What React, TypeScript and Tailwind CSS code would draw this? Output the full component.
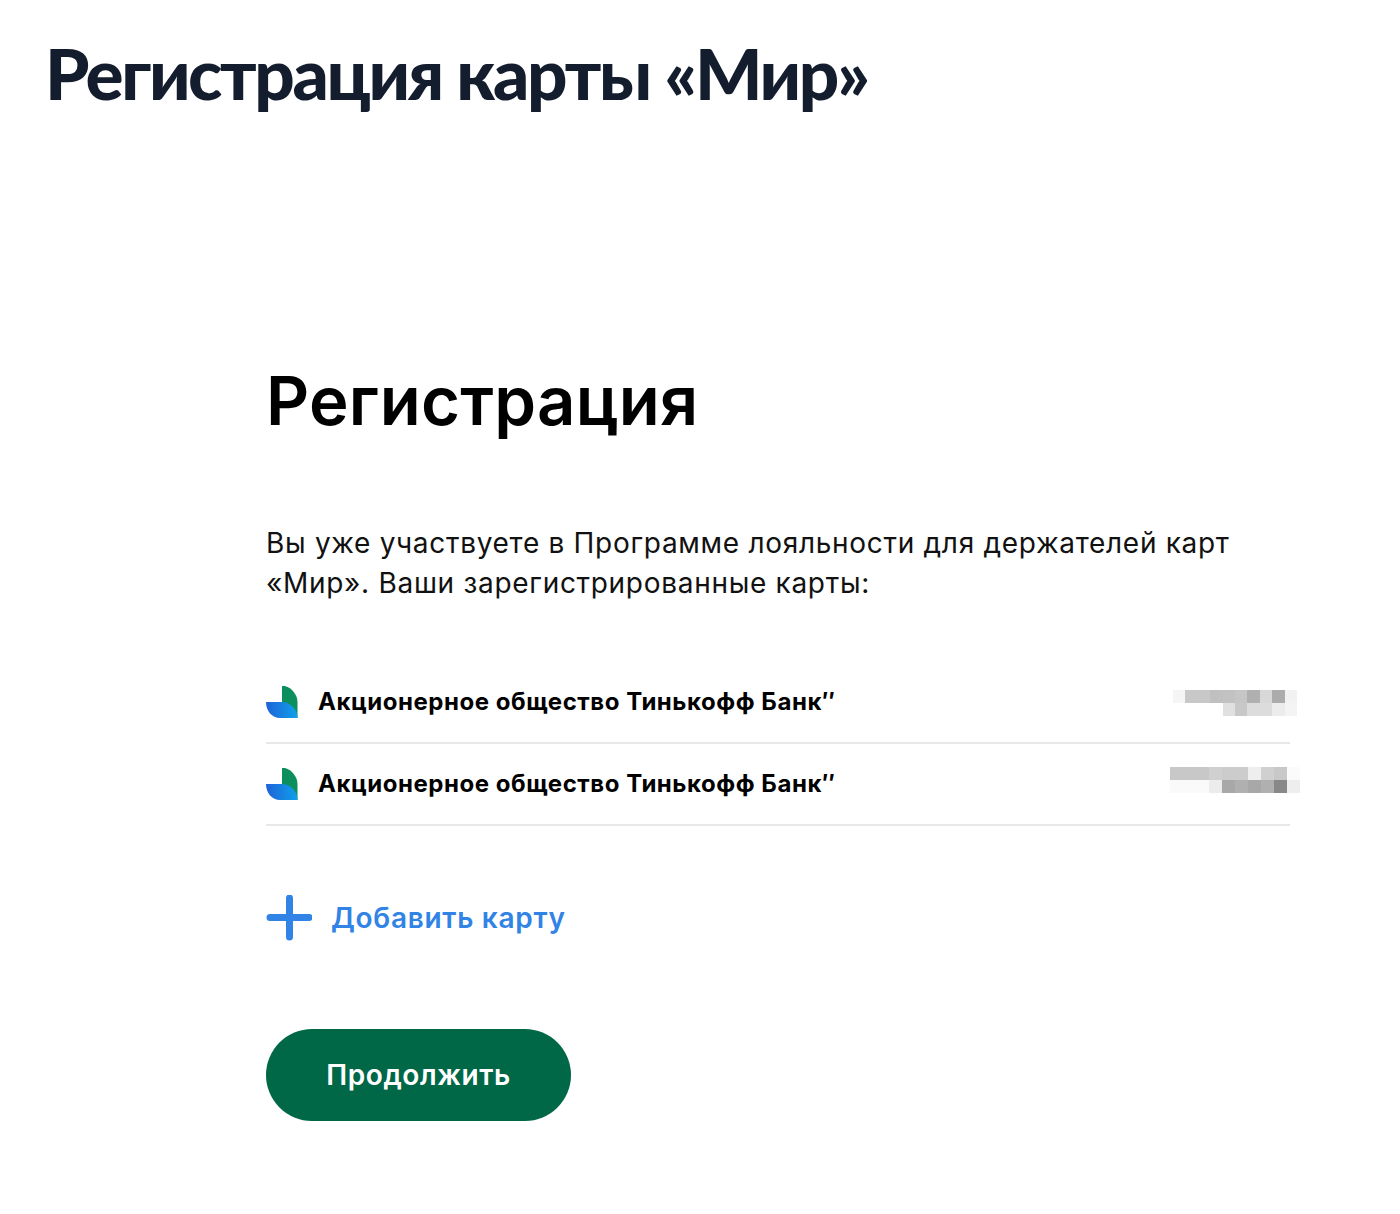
const cardRows = [
  {
    top: ["#f5f5f5", "#c8c8c8", "#c8c8c8", "#c0c0c0", "#c2c2c2", "#c6c6c6", "#b0b0b0", "#d8d8d8", "#acacac", "#f2f2f2"],
    bottom: ["#fff", "#fff", "#fff", "#fff", "#e0e0e0", "#c8c8c8", "#dcdcdc", "#dcdcdc", "#ececec", "#f4f4f4"],
    className: "mt-[2px] -mr-[7px] w-[124px]",
  },
  {
    top: ["#c8c8c8", "#c8c8c8", "#c8c8c8", "#d0d0d0", "#cccccc", "#cccccc", "#eeeeee", "#d0d0d0", "#c8c8c8", "#fbfbfb"],
    bottom: ["#fafafa", "#fafafa", "#fafafa", "#ececec", "#a8a8a8", "#b0b0b0", "#a8a8a8", "#b0b0b0", "#888888", "#eeeeee"],
    className: "mb-[8px] -mr-[10px] w-[130px]",
  },
];

function BankLogo() {
  return (
    <svg width="32" height="32" viewBox="0 0 32 32" className="shrink-0">
      <defs>
        <linearGradient id="bank-blue" x1="0" y1="0" x2="1" y2="0">
          <stop offset="0" stopColor="#1d63d8" />
          <stop offset="1" stopColor="#10a0ea" />
        </linearGradient>
      </defs>
      <path d="M16 0 H19 C26 2 31.5 9 31.5 16 V32 H16 Z" fill="#0c8f5c" />
      <path d="M0 16 H16 C24 16 31.5 23 31.5 32 H14 C6 32 0 25 0 16 Z" fill="url(#bank-blue)" />
    </svg>
  );
}

function Pixels({ rows }: { rows: { top: string[]; bottom: string[]; className: string } }) {
  return (
    <div className={`flex flex-col ${rows.className}`}>
      {[rows.top, rows.bottom].map((row, i) => (
        <div key={i} className="flex">
          {row.map((c, j) => (
            <span key={j} className="h-[13px] flex-1" style={{ backgroundColor: c }} />
          ))}
        </div>
      ))}
    </div>
  );
}

function CardRow({ rows }: { rows: { top: string[]; bottom: string[]; className: string } }) {
  return (
    <div className="flex h-[82px] w-[1024px] items-center border-b-2 border-[#e8e8e8]">
      <BankLogo />
      <span className="ml-[20px] text-[24px] font-bold tracking-[0.54px] text-black">
        Акционерное общество Тинькофф Банк″
      </span>
      <div className="ml-auto">
        <Pixels rows={rows} />
      </div>
    </div>
  );
}

export default function App() {
  return (
    <div className="h-[1214px] w-[1400px] bg-white font-['Inter',sans-serif]">
      <h1 className="pl-[45px] pt-[31px] font-['Lato',sans-serif] text-[71px] leading-[84px] font-black tracking-[-2.4px] text-[#131d2e]">
        Регистрация карты «Мир»
      </h1>

      <main className="pl-[266px] pt-[246px]">
        <h2 className="text-[67px] leading-[80px] font-semibold tracking-[0.25px] text-black">Регистрация</h2>

        <p className="mt-[82px] text-[28px] leading-[40px] tracking-[0.7px] text-[#111]">
          Вы уже участвуете в Программе лояльности для держателей карт
          <br />
          «Мир». Ваши зарегистрированные карты:
        </p>

        <div className="mt-[59px] flex flex-col">
          {cardRows.map((rows, i) => (
            <CardRow key={i} rows={rows} />
          ))}
        </div>

        <a className="mt-[68px] flex items-center gap-[19px] text-[28px] leading-[48px] font-semibold tracking-[0.7px] text-[#3183e6]">
          <svg width="46" height="46" viewBox="0 0 46 46">
            <path d="M23.5 3 V42 M4 22.5 H43" stroke="#3183e6" strokeWidth="7" strokeLinecap="round" />
          </svg>
          Добавить карту
        </a>

        <button className="mt-[87px] block h-[92px] w-[305px] rounded-full bg-[#006747] text-[28px] font-semibold tracking-[0.6px] text-white">
          Продолжить
        </button>
      </main>
    </div>
  );
}
